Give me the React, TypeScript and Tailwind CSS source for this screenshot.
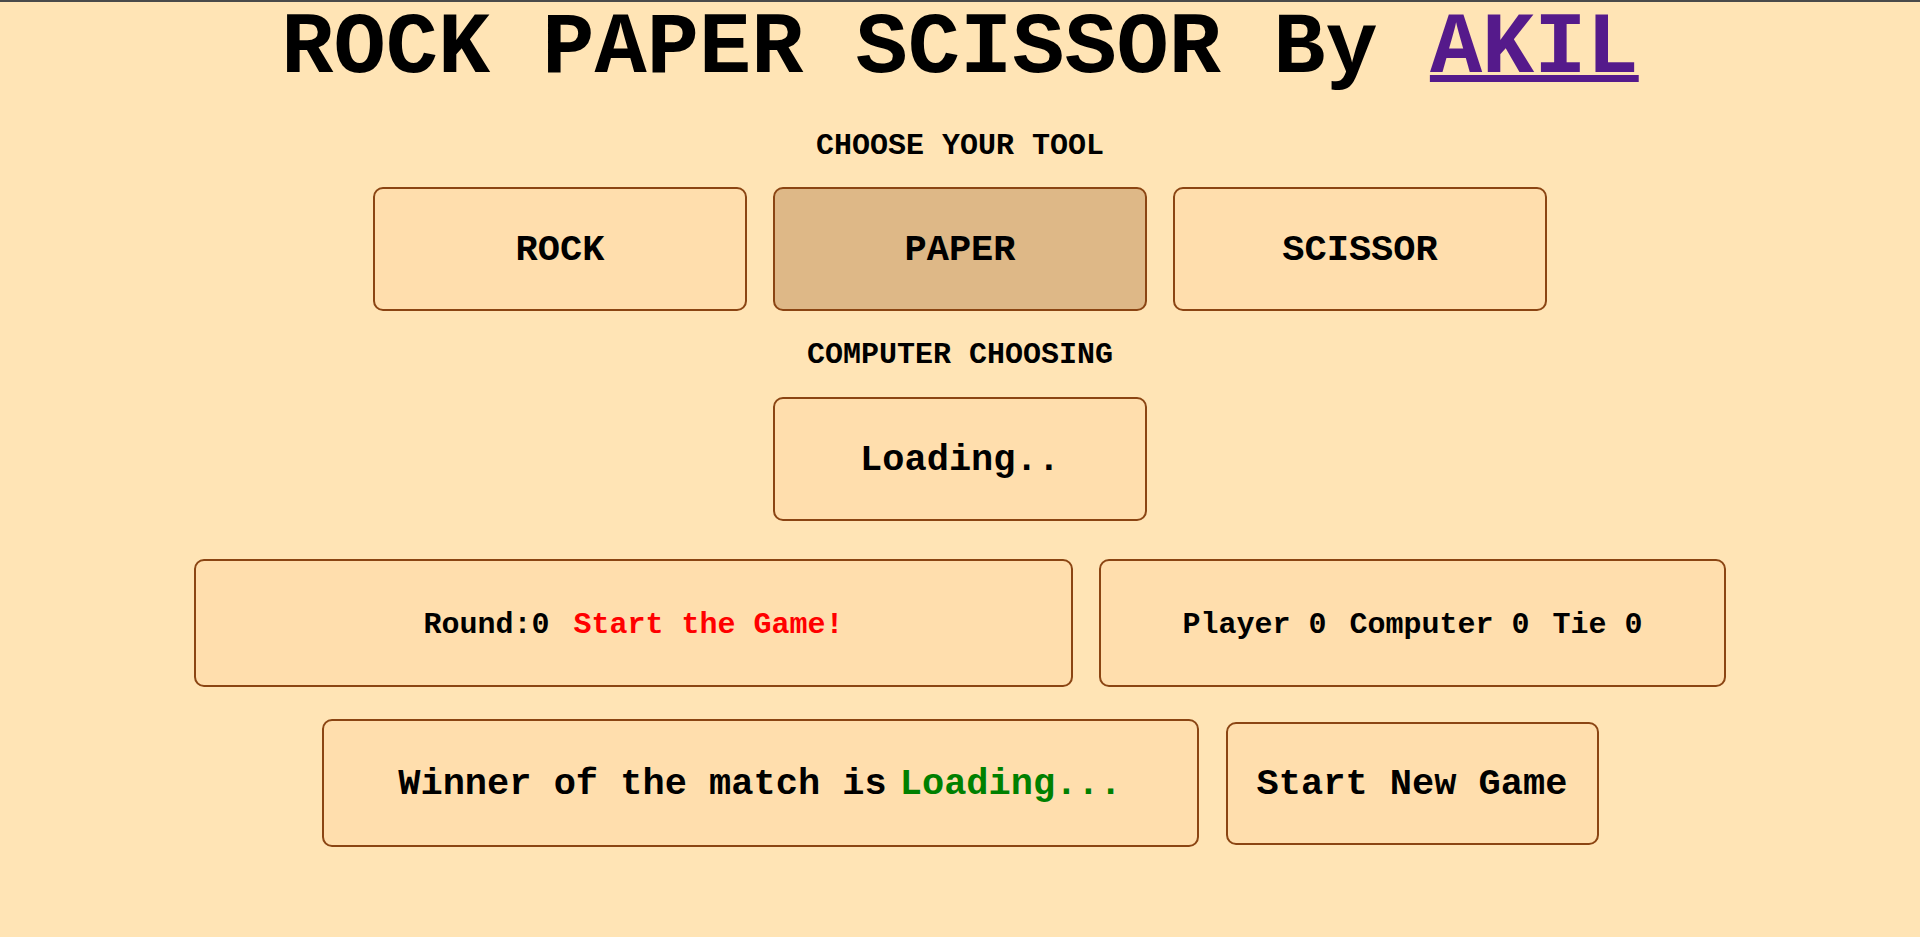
import React from "react";

const box =
  "flex items-center justify-center rounded-[10px] border-2 border-[#8b4513] box-border pt-[4px]";

const tools = ["ROCK", "PAPER", "SCISSOR"];

const App = () => {
  const picked = "PAPER";
  return (
    <div className="min-h-[937px] w-full border-t-2 border-[#4a4a4a] bg-[#ffe4b5] font-['Liberation_Mono','Courier_New',monospace] font-bold text-black">
      <div className="flex flex-col items-center">
        <h1 className="mt-[3px] text-[87px] leading-[88px]">
          ROCK PAPER SCISSOR By{" "}
          <a
            href="#"
            className="text-[#551a8b] underline decoration-[7px] underline-offset-[3px]"
          >
            AKIL
          </a>
        </h1>

        <h3 className="mt-[38px] text-[30px] leading-[30px]">CHOOSE YOUR TOOL</h3>

        <div className="mt-[26px] flex gap-[26px]">
          {tools.map((tool) => (
            <button
              key={tool}
              className={`${box} h-[124px] w-[374px] text-[37px] ${
                tool === picked ? "bg-[#deb887]" : "bg-[#ffdead]"
              }`}
            >
              {tool}
            </button>
          ))}
        </div>

        <h3 className="mt-[29px] text-[30px] leading-[30px]">COMPUTER CHOOSING</h3>

        <div className={`${box} mt-[27px] h-[124px] w-[374px] bg-[#ffdead] text-[37px]`}>
          Loading..
        </div>

        <div className="mt-[38px] flex gap-[26px]">
          <div className={`${box} h-[128px] w-[879px] gap-[24px] bg-[#ffdead] text-[30px]`}>
            <span>Round:0</span>
            <span className="text-[#ff0000]">Start the Game!</span>
          </div>
          <div className={`${box} h-[128px] w-[627px] gap-[23px] bg-[#ffdead] text-[30px]`}>
            <span>Player 0</span>
            <span>Computer 0</span>
            <span>Tie 0</span>
          </div>
        </div>

        <div className="mt-[32px] flex items-center gap-[27px]">
          <div className={`${box} h-[128px] w-[877px] bg-[#ffdead] text-[37px]`}>
            <span>Winner of the match is</span>
            <span className="ml-[13px] text-[#008000]">Loading...</span>
          </div>
          <button className={`${box} h-[123px] w-[373px] bg-[#ffdead] text-[37px]`}>
            Start New Game
          </button>
        </div>
      </div>
    </div>
  );
};

export default App;
